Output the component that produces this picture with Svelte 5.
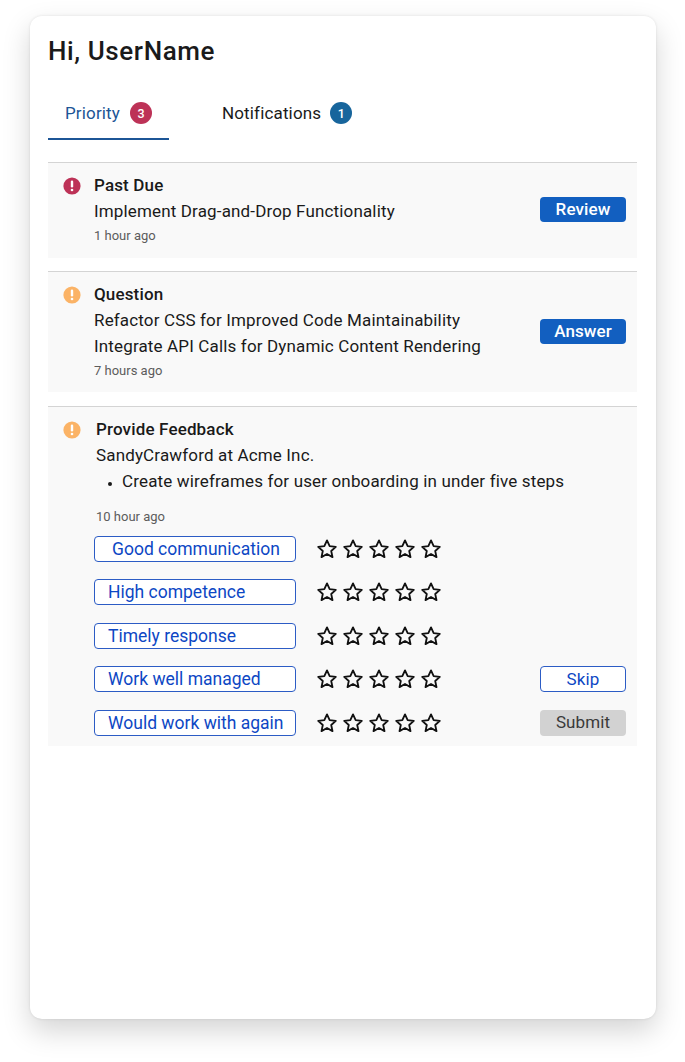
<script>
  const ratings = [
    { label: "Good communication", centered: true },
    { label: "High competence" },
    { label: "Timely response" },
    { label: "Work well managed", action: "skip" },
    { label: "Would work with again", action: "submit" },
  ];
  const stars = [1, 2, 3, 4, 5];
</script>

{#snippet alert(color)}
  <svg class="alert" viewBox="0 0 18 18" width="18" height="18">
    <circle cx="9" cy="9" r="8.6" fill={color} />
    <rect x="7.8" y="3.6" width="2.4" height="6.8" rx="1.2" fill="#fff" />
    <circle cx="9" cy="13" r="1.3" fill="#fff" />
  </svg>
{/snippet}

<div class="page">
  <div class="card">
    <h1>Hi, UserName</h1>

    <div class="tabs">
      <div class="tab active">
        <span>Priority</span>
        <span class="count red">3</span>
      </div>
      <div class="tab">
        <span>Notifications</span>
        <span class="count blue">1</span>
      </div>
    </div>

    <section class="item first">
      {@render alert("#bd3257")}
      <div class="body">
        <div class="title">Past Due</div>
        <div class="line">Implement Drag-and-Drop Functionality</div>
        <div class="time">1 hour ago</div>
      </div>
      <button class="primary">Review</button>
    </section>

    <section class="item second">
      {@render alert("#fbb366")}
      <div class="body">
        <div class="title">Question</div>
        <div class="line">Refactor CSS for Improved Code Maintainability</div>
        <div class="line">Integrate API Calls for Dynamic Content Rendering</div>
        <div class="time">7 hours ago</div>
      </div>
      <button class="primary">Answer</button>
    </section>

    <section class="item feedback">
      {@render alert("#fbb366")}
      <div class="body">
        <div class="title">Provide Feedback</div>
        <div class="line">SandyCrawford at Acme Inc.</div>
        <ul>
          <li>Create wireframes for user onboarding in under five steps</li>
        </ul>
        <div class="time">10 hour ago</div>
        <div class="ratings">
          {#each ratings as r}
            <div class="rating">
              <div class="tag" class:centered={r.centered}>{r.label}</div>
              <div class="stars">
                {#each stars as s}
                  <svg viewBox="0 0 24 24" width="22" height="22">
                    <path
                      d="M12 2.6l2.9 6.2 6.7.8-5 4.6 1.4 6.7-6-3.4-6 3.4 1.4-6.7-5-4.6 6.7-.8z"
                      fill="none"
                      stroke="#111"
                      stroke-width="2"
                      stroke-linejoin="round"
                    />
                  </svg>
                {/each}
              </div>
              {#if r.action === "skip"}
                <button class="outline">Skip</button>
              {:else if r.action === "submit"}
                <button class="disabled">Submit</button>
              {/if}
            </div>
          {/each}
        </div>
      </div>
    </section>
  </div>
</div>

<style>
  :global(body) {
    background: #fff;
  }

  .page {
    box-sizing: border-box;
    height: 1062px;
    padding: 16px 29px 43px 30px;
    overflow: hidden;
  }

  .card {
    box-sizing: border-box;
    height: 1003px;
    padding: 19px 19px 0 18px;
    background: #fff;
    border-radius: 12px;
    box-shadow: 0 12px 28px rgba(0, 0, 0, 0.17), 0 0 3px rgba(0, 0, 0, 0.1);
    font-family: Roboto, sans-serif;
    color: #1a1a1a;
  }

  h1 {
    margin: 0;
    font-size: 26px;
    line-height: 32px;
    font-weight: 500;
    letter-spacing: 0.6px;
  }

  .tabs {
    display: flex;
    margin-top: 21px;
    margin-bottom: 22px;
  }

  .tab {
    display: flex;
    align-items: center;
    gap: 9px;
    height: 52px;
    padding: 0 17px;
    box-sizing: border-box;
    font-size: 17px;
    letter-spacing: 0.15px;
  }

  .tab.active {
    width: 121px;
    gap: 10px;
    color: #1c5596;
    border-bottom: 2px solid #1c5596;
  }

  .tab:not(.active) {
    padding-left: 53px;
    padding-bottom: 2px;
  }

  .count {
    width: 22px;
    height: 22px;
    border-radius: 50%;
    display: flex;
    align-items: center;
    justify-content: center;
    color: #fff;
    font-size: 12.5px;
    font-weight: 500;
    letter-spacing: 0;
  }

  .red {
    background: #bd3257;
  }

  .blue {
    background: #17659c;
  }

  .item {
    display: flex;
    align-items: flex-start;
    box-sizing: border-box;
    background: #f9f9f9;
    border-top: 1px solid #d4d4d4;
    padding: 12px 11px 0 15px;
    margin-bottom: 13px;
  }

  .first {
    height: 96px;
  }

  .second {
    height: 121px;
    margin-bottom: 14px;
  }

  .feedback {
    height: 340px;
    margin-bottom: 0;
  }

  .alert {
    flex: none;
    margin-top: 2px;
    margin-right: 13px;
  }

  .feedback .alert {
    margin-right: 15px;
  }

  .body {
    flex: 1;
    min-width: 0;
  }

  .title {
    font-size: 17px;
    line-height: 21px;
    font-weight: 500;
    letter-spacing: 0.15px;
  }

  .line {
    margin-top: 5px;
    font-size: 17px;
    line-height: 21px;
    letter-spacing: 0.15px;
  }

  .time {
    margin-top: 4px;
    font-size: 13px;
    line-height: 20px;
    color: #5c5c5c;
  }

  ul {
    margin: 5px 0 0;
    padding: 0 0 0 26px;
    font-size: 17px;
    line-height: 21px;
    letter-spacing: 0.15px;
  }

  li::marker {
    font-size: 12px;
  }

  .feedback .time {
    margin-top: 15px;
  }

  button {
    flex: none;
    box-sizing: border-box;
    width: 86px;
    height: 26px;
    padding: 0 0 1px;
    border-radius: 4px;
    border: 1px solid transparent;
    font-family: inherit;
    font-size: 17px;
    letter-spacing: 0.1px;
  }

  .primary {
    height: 25px;
    background: #125fc0;
    color: #fff;
    font-weight: 500;
  }

  .first .primary {
    margin-top: 22px;
  }

  .second .primary {
    margin-top: 35px;
  }

  .outline {
    background: #fff;
    border-color: #2c5cc5;
    color: #0d47c4;
  }

  .disabled {
    background: #d2d2d2;
    color: #3a3a3a;
  }

  .ratings {
    display: flex;
    flex-direction: column;
    gap: 17.4px;
    margin-top: 9px;
    margin-left: -2px;
  }

  .rating {
    display: flex;
    align-items: center;
    height: 26px;
  }

  .tag {
    box-sizing: border-box;
    width: 202px;
    height: 26px;
    padding-left: 13px;
    line-height: 24px;
    background: #fff;
    border: 1px solid #2c5cc5;
    border-radius: 4px;
    color: #0d47c4;
    font-size: 17.5px;
    white-space: nowrap;
  }

  .tag.centered {
    padding-left: 17px;
  }

  .stars {
    display: flex;
    gap: 4px;
    margin-left: 20px;
    flex: 1;
  }

  .stars svg {
    display: block;
  }
</style>
